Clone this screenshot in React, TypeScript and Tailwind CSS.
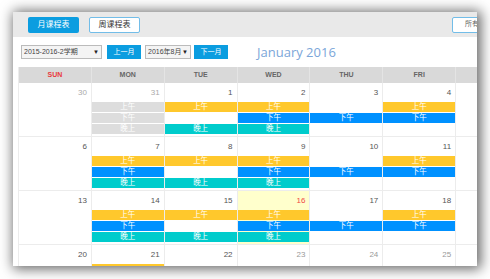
import React from "react";

type Day = { n?: number; muted?: boolean; today?: boolean; am?: boolean; pm?: boolean; eve?: boolean; past?: boolean; faded?: boolean; cut?: boolean };

// Saturday is past the window's right edge, so its cells carry no text
const weeks: Day[][] = [
  [
    { n: 30, muted: true },
    { n: 31, muted: true, am: true, pm: true, eve: true, past: true },
    { n: 1, am: true, eve: true },
    { n: 2, am: true, pm: true, eve: true },
    { n: 3, pm: true },
    { n: 4, am: true, pm: true },
    {},
  ],
  [
    { n: 6 },
    { n: 7, am: true, pm: true, eve: true },
    { n: 8, am: true, eve: true },
    { n: 9, am: true, pm: true, eve: true },
    { n: 10, pm: true },
    { n: 11, am: true, pm: true },
    {},
  ],
  [
    { n: 13 },
    { n: 14, am: true, pm: true, eve: true },
    { n: 15, am: true, eve: true },
    { n: 16, today: true, am: true, pm: true, eve: true },
    { n: 17, pm: true },
    { n: 18, am: true, pm: true },
    {},
  ],
  [
    { n: 20 },
    { n: 21, am: true, cut: true },
    { n: 22 },
    { n: 23, faded: true },
    { n: 24, faded: true },
    { n: 25, faded: true },
    {},
  ],
];

const heads = ["SUN", "MON", "TUE", "WED", "THU", "FRI", ""];

function Bar({ on, label, color }: { on?: boolean; label: string; color: string }) {
  return (
    <div className={`h-[10px] mb-[1px] flex items-center justify-center text-[7.5px] leading-none text-white ${on ? color : ""}`}>
      {on ? label : ""}
    </div>
  );
}

export default function App() {
  const font = { fontFamily: '"Liberation Sans", "Noto Sans CJK SC", sans-serif' };
  return (
    <div className="w-[490px] h-[279px] bg-white flex items-start pt-[12px] pl-[13px] overflow-hidden" style={font}>
      <div className="w-[464px] min-w-[464px] shrink-0 h-[254px] bg-white overflow-hidden shadow-[2px_1px_12px_2px_rgba(0,0,0,0.6)]">
        <div className="h-[25px] bg-[#e9e9e9] flex items-center pl-[15px]">
          <div className="w-[51px] h-[16px] shrink-0 rounded-[2px] bg-[#0b9de0] text-white text-[8px] flex items-center justify-center">月课程表</div>
          <div className="w-[51px] h-[16px] shrink-0 ml-[10px] rounded-[2px] bg-white border border-[#72bde8] text-[#333] text-[8px] flex items-center justify-center">周课程表</div>
          <div className="w-[40px] h-[16px] shrink-0 ml-[312px] rounded-l-[2px] bg-white border border-[#72bde8] text-[#666] text-[7px] flex items-center pl-[12px] overflow-hidden whitespace-nowrap">所有课程</div>
        </div>
        <div className="h-[30px] flex items-center pl-[8px]">
          <div className="w-[81px] h-[14px] shrink-0 border border-[#bbb] bg-[#f4f4f4] text-[7px] text-[#444] flex items-center justify-between px-[2px]">
            <span>2015-2016-2学期</span>
            <span className="text-[6px] text-[#222]">▼</span>
          </div>
          <div className="w-[34px] h-[14px] shrink-0 ml-[5px] bg-[#0b9de0] text-white text-[7px] flex items-center justify-center">上一月</div>
          <div className="w-[46px] h-[14px] shrink-0 ml-[4px] border border-[#bbb] bg-[#f4f4f4] text-[7px] text-[#444] flex items-center justify-between px-[2px]">
            <span>2016年8月</span>
            <span className="text-[6px] text-[#222]">▼</span>
          </div>
          <div className="w-[34px] h-[14px] shrink-0 ml-[3px] bg-[#0b9de0] text-white text-[7px] flex items-center justify-center">下一月</div>
          <div className="ml-[29px] text-[13px] text-[#7ba6d9] leading-none" style={{ fontFamily: '"Open Sans", sans-serif' }}>January 2016</div>
        </div>
        <div className="ml-[5px] w-[511px] border-l border-[#ececec]">
          <div className="grid grid-cols-7 h-[16px] bg-[#d9d9d9]">
            {heads.map((h, i) => (
              <div key={i} className={`flex items-center justify-center text-[7px] font-bold border-r border-[#e4e4e4] ${i === 0 ? "text-[#e8383d]" : "text-[#666]"}`}>{h}</div>
            ))}
          </div>
          {weeks.map((w, wi) => (
            <div key={wi} className="grid grid-cols-7 h-[54px] border-b border-[#ececec]">
              {w.map((d, di) => (
                <div key={di} className={`border-r border-[#ececec] ${d.today ? "bg-[#ffffcc]" : ""}`}>
                  <div className={`h-[19px] flex items-center justify-end pr-[4px] text-[8px] ${d.today ? "text-[#f04848]" : d.muted ? "text-[#aaa]" : d.faded ? "text-[#999]" : "text-[#555]"}`}>
                    {d.n}
                  </div>
                  <Bar on={d.am} label={d.cut ? "" : "上午"} color={d.past ? "bg-[#dddddd]" : "bg-[#ffc82c]"} />
                  <Bar on={d.pm} label="下午" color={d.past ? "bg-[#dddddd]" : "bg-[#0091ff]"} />
                  <Bar on={d.eve} label="晚上" color={d.past ? "bg-[#dddddd]" : "bg-[#00cccc]"} />
                </div>
              ))}
            </div>
          ))}
        </div>
      </div>
    </div>
  );
}
